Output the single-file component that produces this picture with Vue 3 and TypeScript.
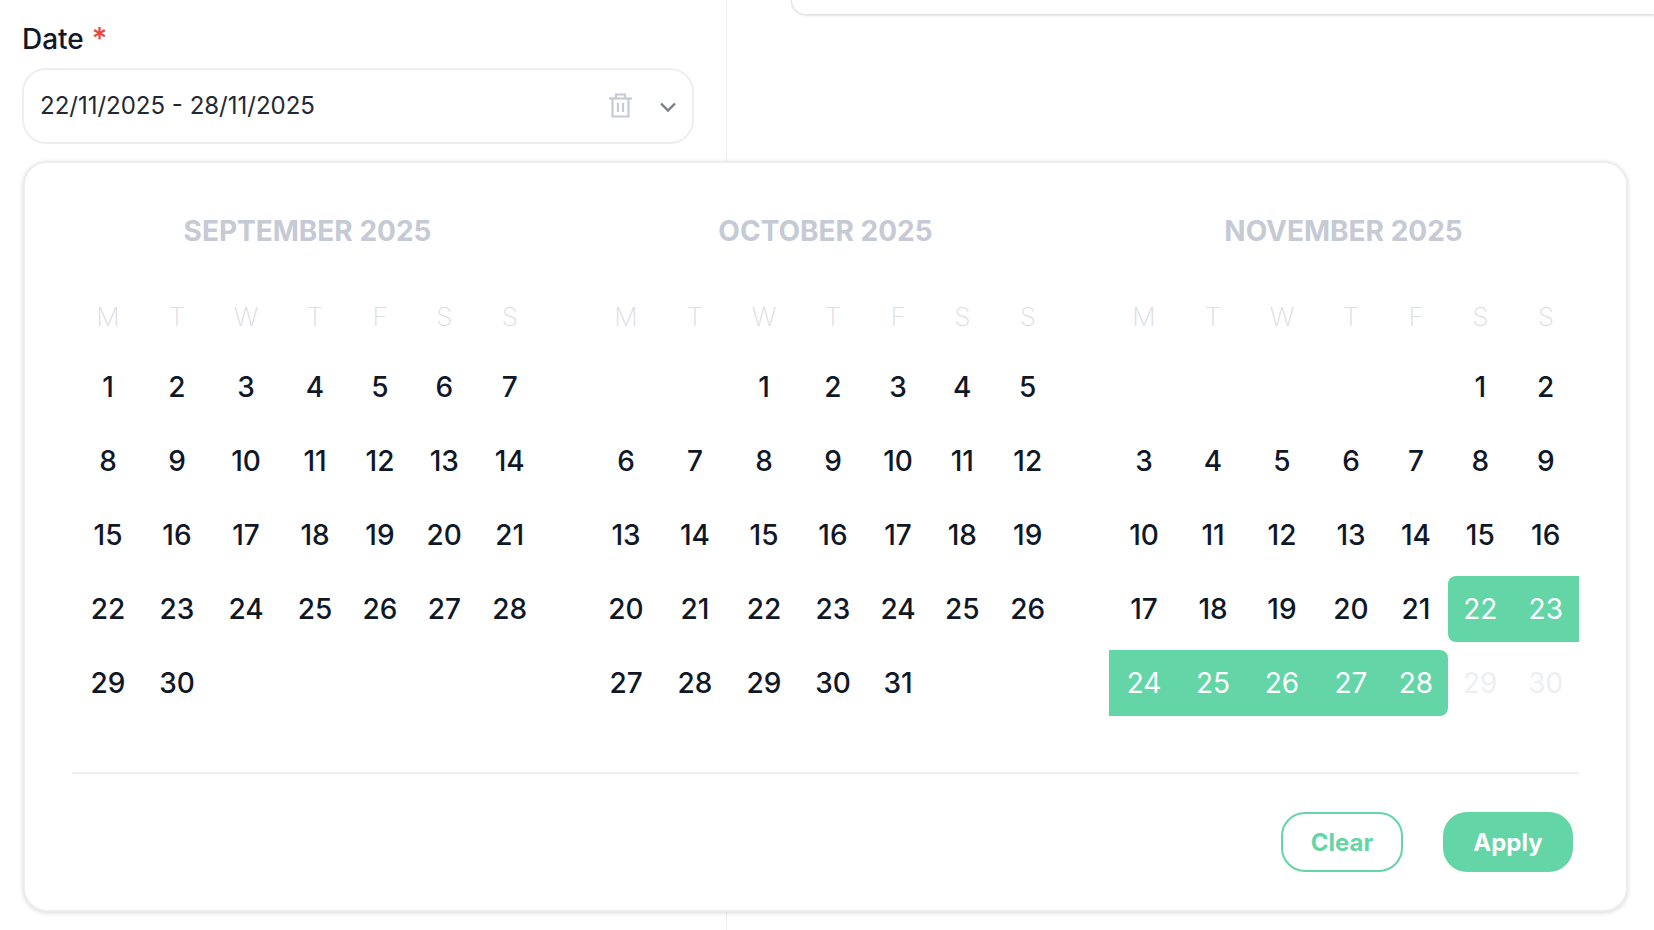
<script setup lang="ts">
interface Month {
  title: string;
  offset: number;
  days: number;
}

const weekdays = ["M", "T", "W", "T", "F", "S", "S"];

const months: Month[] = [
  { title: "SEPTEMBER 2025", offset: 0, days: 30 },
  { title: "OCTOBER 2025", offset: 2, days: 31 },
  { title: "NOVEMBER 2025", offset: 5, days: 30 },
];

function blanks(m: Month) {
  return Array.from({ length: m.offset }, (_, i) => i);
}

function dayList(m: Month) {
  return Array.from({ length: m.days }, (_, i) => i + 1);
}

function dayClass(m: Month, day: number) {
  if (m.title !== "NOVEMBER 2025") return "";
  if (day < 22) return "";
  if (day > 28) return "muted";
  return {
    selected: true,
    "round-left": day === 22,
    "round-right": day === 28,
  };
}
</script>

<template>
  <div class="page">
    <div class="left">
      <label class="field-label">Date<span class="req">*</span></label>
      <div class="input">
        <span class="value">22/11/2025 - 28/11/2025</span>
        <svg class="trash" viewBox="0 0 23 25" fill="none" stroke="#c5cad5" stroke-width="2.200">
          <path d="M0 5.500h23" />
          <path d="M7 5V1.500h9V5" />
          <path d="M3.500 5.500v18h16v-18" />
          <path d="M9 10v9M14 10v9" />
        </svg>
        <svg class="chevron" viewBox="0 0 16 10" fill="none" stroke="#7b7f88" stroke-width="2.400">
          <path d="M1 1.500l7 7 7-7" />
        </svg>
      </div>
    </div>
    <div class="right">
      <div class="top-card"></div>
    </div>

    <div class="popup">
      <div class="months">
        <div v-for="m in months" :key="m.title" class="month">
          <div class="month-title">{{ m.title }}</div>
          <div class="grid">
            <div v-for="(w, i) in weekdays" :key="i" class="cell weekday">{{ w }}</div>
            <div v-for="b in blanks(m)" :key="'b' + b" class="cell"></div>
            <div v-for="d in dayList(m)" :key="d" class="cell" :class="dayClass(m, d)">{{ d }}</div>
          </div>
        </div>
      </div>
      <div class="footer">
        <button class="btn clear">Clear</button>
        <button class="btn apply">Apply</button>
      </div>
    </div>
  </div>
</template>

<style>
html,
body {
  margin: 0;
  background: #fff;
}
</style>

<style scoped>
.page {
  position: relative;
  display: flex;
  width: 1654px;
  height: 930px;
  overflow: hidden;
  background: #fff;
  font-family: Inter, "Liberation Sans", sans-serif;
  color: #101828;
}

.left {
  width: 727px;
  box-sizing: border-box;
  padding: 21px 32px 0 22px;
  border-right: 1px solid #eeeeef;
}

.field-label {
  display: block;
  height: 34px;
  line-height: 34px;
  font-size: 28px;
  font-weight: 500;
  margin-bottom: 13px;
}

.req {
  color: #f04438;
  margin-left: 8px;
  font-size: 30px;
}

.input {
  display: flex;
  align-items: center;
  height: 76px;
  box-sizing: border-box;
  padding: 0 16px 0 16px;
  border: 2px solid #eeeeef;
  border-radius: 24px;
}

.value {
  flex: 1;
  font-size: 24px;
  color: #232833;
  margin-top: -1px;
}

.trash {
  width: 23px;
  height: 25px;
  margin-top: -2px;
}

.chevron {
  width: 16px;
  height: 10px;
  margin-left: 28px;
  margin-top: 1px;
}

.right {
  flex: 1;
}

.top-card {
  margin-left: 64px;
  height: 14px;
  border: 1px solid #e4e4e6;
  border-top: 0;
  border-right: 0;
  border-radius: 0 0 0 22px;
  box-shadow: 0 1px 2px rgba(16, 24, 40, 0.12);
}

.popup {
  position: absolute;
  left: 23px;
  top: 161px;
  width: 1605px;
  height: 751px;
  box-sizing: border-box;
  padding: 51px 47px 0 47px;
  background: #fff;
  border: 2px solid #ededee;
  border-radius: 24px;
  box-shadow: 0 1px 4px rgba(16, 24, 40, 0.16);
}

.months {
  display: flex;
  gap: 48px;
  padding-left: 1px;
  padding-bottom: 56px;
  border-bottom: 2px solid #eeeeef;
}

.month {
  width: 470px;
}

.month-title {
  height: 34px;
  line-height: 34px;
  margin-bottom: 39px;
  text-align: center;
  font-size: 28px;
  font-weight: 650;
  color: #c5cad5;
  padding-right: 1px;
}

.grid {
  display: grid;
  grid-template-columns: 69px 69px 69px 69px 63px 65.5px 65.5px;
  grid-template-rows: 59px;
  grid-auto-rows: 66px;
  row-gap: 8px;
}

.cell {
  display: flex;
  align-items: center;
  justify-content: center;
  padding-left: 1px;
  font-size: 28px;
  font-weight: 450;
}

.cell:nth-child(7n + 5),
.cell:nth-child(7n + 6),
.cell:nth-child(7n + 7) {
  padding-left: 0;
  padding-right: 1px;
}

.weekday {
  font-weight: 200;
  font-size: 26px;
  color: #dcdde3;
}

.muted {
  color: #eeeff1;
  font-weight: 400;
}

.selected {
  background: #64d5a6;
  color: #fff;
  font-weight: 400;
}

.round-left {
  border-radius: 8px 0 0 8px;
}

.round-right {
  border-radius: 0 8px 8px 0;
}

.footer {
  display: flex;
  justify-content: flex-end;
  gap: 40px;
  padding: 38px 6px 0 0;
}

.btn {
  height: 60px;
  box-sizing: border-box;
  border-radius: 24px;
  font-family: inherit;
  font-size: 24px;
  font-weight: 700;
}

.clear {
  width: 122px;
  background: #fff;
  border: 2px solid #64d5a6;
  color: #64d5a6;
}

.apply {
  width: 130px;
  background: #64d5a6;
  border: 0;
  color: #fff;
}
</style>
